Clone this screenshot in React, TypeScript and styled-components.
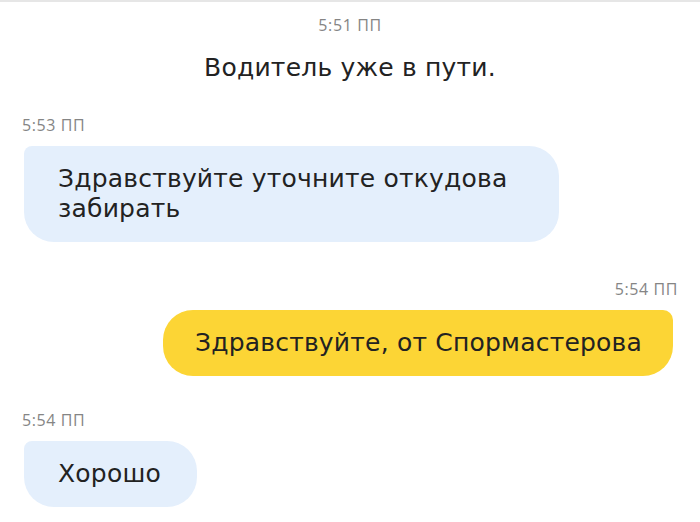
import React from "react";
import styled, { createGlobalStyle } from "styled-components";

const Global = createGlobalStyle`
  html, body { margin: 0; padding: 0; background: #ffffff; }
  body { font-family: "Open Sans", "Noto Sans", sans-serif; color: #222222; }
`;

const Screen = styled.div`
  width: 700px;
  height: 522px;
  box-sizing: border-box;
  border-top: 2px solid #e6e6e6;
  display: flex;
  flex-direction: column;
  padding: 0 22px;
  overflow: hidden;
`;

const Time = styled.div<{ $align: "left" | "center" | "right" }>`
  font-size: 16px;
  line-height: 18px;
  color: #858585;
  letter-spacing: 0.6px;
  text-align: ${(p) => p.$align};
  margin-top: ${(p) => (p.$align === "center" ? "14px" : "0")};
`;

const SystemLine = styled.div`
  font-family: "DejaVu Sans", "Open Sans", sans-serif;
  font-size: 25px;
  line-height: 32px;
  text-align: center;
  letter-spacing: 0.2px;
  margin-top: 18px;
  margin-bottom: 32px;
  color: #222222;
`;

const Message = styled.div<{ $mine?: boolean; $gap?: number }>`
  display: flex;
  flex-direction: column;
  align-items: ${(p) => (p.$mine ? "flex-end" : "flex-start")};
  gap: 12px;
  margin-top: ${(p) => p.$gap ?? 0}px;
`;

const Bubble = styled.div<{ $mine?: boolean }>`
  box-sizing: border-box;
  max-width: 535px;
  margin-left: ${(p) => (p.$mine ? "0" : "2px")};
  margin-right: ${(p) => (p.$mine ? "5px" : "0")};
  padding: ${(p) => (p.$mine ? "18px 31px 18px 32px" : "18px 36px 18px 34px")};
  font-family: "DejaVu Sans", "Open Sans", sans-serif;
  font-size: 25px;
  line-height: 30px;
  letter-spacing: 0.2px;
  color: #222222;
  background: ${(p) => (p.$mine ? "#fcd535" : "#e4effc")};
  border-radius: ${(p) => (p.$mine ? "30px 10px 30px 30px" : "8px 30px 30px 30px")};
`;

export default function App() {
  return (
    <>
      <Global />
      <Screen>
        <Time $align="center">5:51 ПП</Time>
        <SystemLine>Водитель уже в пути.</SystemLine>
        <Message>
          <Time $align="left">5:53 ПП</Time>
          <Bubble>Здравствуйте уточните откудова забирать</Bubble>
        </Message>
        <Message $mine $gap={38}>
          <Time $align="right">5:54 ПП</Time>
          <Bubble $mine>Здравствуйте, от Спормастерова</Bubble>
        </Message>
        <Message $gap={35}>
          <Time $align="left">5:54 ПП</Time>
          <Bubble>Хорошо</Bubble>
        </Message>
      </Screen>
    </>
  );
}
